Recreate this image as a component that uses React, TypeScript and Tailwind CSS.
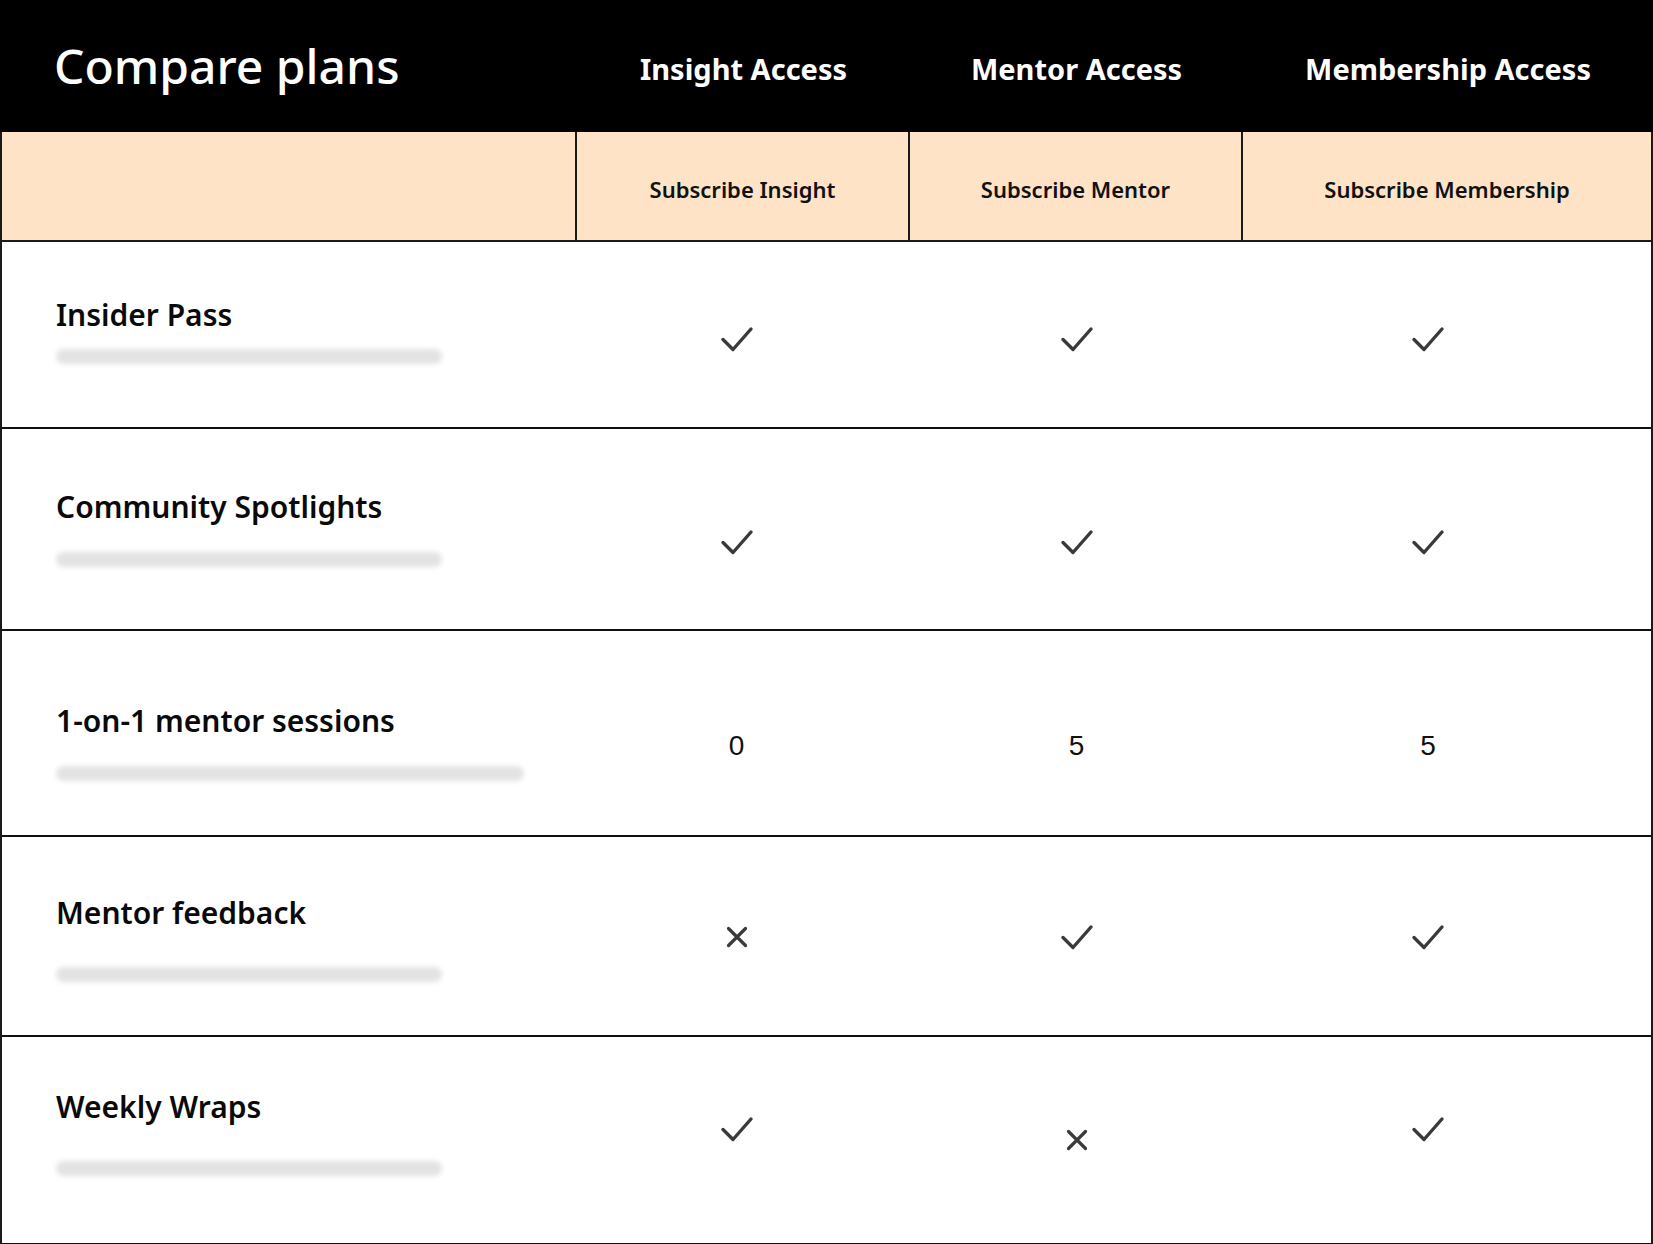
import React from "react";

type Val = { kind: "check" | "x" | "num"; text?: string; pt: string };
type Row = {
  label: string;
  h: string;
  lpt: string;
  gap: string;
  bar: string;
  vals: Val[];
};

const rows: Row[] = [
  {
    label: "Insider Pass",
    h: "h-[187px]",
    lpt: "pt-[55px]",
    gap: "mt-[16px]",
    bar: "w-[386px]",
    vals: [
      { kind: "check", pt: "pt-[83px]" },
      { kind: "check", pt: "pt-[83px]" },
      { kind: "check", pt: "pt-[83px]" },
    ],
  },
  {
    label: "Community Spotlights",
    h: "h-[202px]",
    lpt: "pt-[60px]",
    gap: "mt-[27px]",
    bar: "w-[386px]",
    vals: [
      { kind: "check", pt: "pt-[99px]" },
      { kind: "check", pt: "pt-[99px]" },
      { kind: "check", pt: "pt-[99px]" },
    ],
  },
  {
    label: "1-on-1 mentor sessions",
    h: "h-[206px]",
    lpt: "pt-[72px]",
    gap: "mt-[27px]",
    bar: "w-[468px]",
    vals: [
      { kind: "num", text: "0", pt: "pt-[101px]" },
      { kind: "num", text: "5", pt: "pt-[101px]" },
      { kind: "num", text: "5", pt: "pt-[101px]" },
    ],
  },
  {
    label: "Mentor feedback",
    h: "h-[200px]",
    lpt: "pt-[58px]",
    gap: "mt-[36px]",
    bar: "w-[386px]",
    vals: [
      { kind: "x", pt: "pt-[88px]" },
      { kind: "check", pt: "pt-[86px]" },
      { kind: "check", pt: "pt-[86px]" },
    ],
  },
  {
    label: "Weekly Wraps",
    h: "h-[208px]",
    lpt: "pt-[52px]",
    gap: "mt-[36px]",
    bar: "w-[386px]",
    vals: [
      { kind: "check", pt: "pt-[78px]" },
      { kind: "x", pt: "pt-[91px]" },
      { kind: "check", pt: "pt-[78px]" },
    ],
  },
];

const colShift = ["pr-[14px]", "", "pr-[38px]"];

function Check() {
  return (
    <svg width="34" height="28" viewBox="0 0 34 28" fill="none">
      <polyline
        points="3,14.5 13,24.5 31,4"
        stroke="#3a3a3a"
        strokeWidth="3.4"
        strokeLinecap="round"
        strokeLinejoin="round"
      />
    </svg>
  );
}

function Cross() {
  return (
    <svg width="24" height="24" viewBox="0 0 24 24" fill="none">
      <path
        d="M3.5 3.5 L20.5 20.5 M20.5 3.5 L3.5 20.5"
        stroke="#3a3a3a"
        strokeWidth="3.2"
        strokeLinecap="round"
      />
    </svg>
  );
}

export default function App() {
  return (
    <div className="w-[1653px] h-[1244px] bg-white font-['Noto_Sans',sans-serif] overflow-hidden">
      {/* Black header */}
      <div className="grid grid-cols-[577px_333px_333px_410px] h-[132px] bg-black text-white items-center">
        <div className="pl-[54px] text-[48px] font-medium leading-none">
          Compare plans
        </div>
        <div className="text-center text-[29px] font-bold leading-none pt-[4px]">
          Insight Access
        </div>
        <div className="text-center text-[29px] font-bold leading-none pt-[4px]">
          Mentor Access
        </div>
        <div className="text-center text-[29px] font-bold leading-none pt-[4px]">
          Membership Access
        </div>
      </div>

      {/* Peach subscribe row */}
      <div className="grid grid-cols-[575px_333px_333px_408px] h-[110px] bg-[#fee3c7] border-l-2 border-r-2 border-b-2 border-[#1a1a1a]">
        <div className="border-r-2 border-[#1a1a1a]" />
        <div className="border-r-2 border-[#1a1a1a] flex items-center justify-center text-[22px] font-semibold text-[#111] pt-[6px]">
          Subscribe Insight
        </div>
        <div className="border-r-2 border-[#1a1a1a] flex items-center justify-center text-[22px] font-semibold text-[#111] pt-[6px]">
          Subscribe Mentor
        </div>
        <div className="flex items-center justify-center text-[22px] font-semibold text-[#111] pt-[6px]">
          Subscribe Membership
        </div>
      </div>

      {/* Body rows */}
      <div className="border-l-2 border-r-2 border-[#1a1a1a]">
        {rows.map((r) => (
          <div
            key={r.label}
            className={`grid grid-cols-[575px_333px_333px_408px] border-b-2 border-[#111] ${r.h}`}
          >
            <div className={`flex flex-col pl-[54px] ${r.lpt}`}>
              <div className="text-[30px] font-semibold leading-[36px] text-[#0a0a0a]">
                {r.label}
              </div>
              <div
                className={`h-[15px] rounded-full bg-[#e3e3e3] blur-[2.5px] ${r.bar} ${r.gap}`}
              />
            </div>
            {r.vals.map((v, i) => (
              <div
                key={i}
                className={`flex justify-center items-start ${v.pt} ${colShift[i]}`}
              >
                {v.kind === "check" && <Check />}
                {v.kind === "x" && <Cross />}
                {v.kind === "num" && (
                  <span className="font-['Liberation_Sans',Arial,sans-serif] text-[28px] leading-none text-[#111]">
                    {v.text}
                  </span>
                )}
              </div>
            ))}
          </div>
        ))}
      </div>
    </div>
  );
}
